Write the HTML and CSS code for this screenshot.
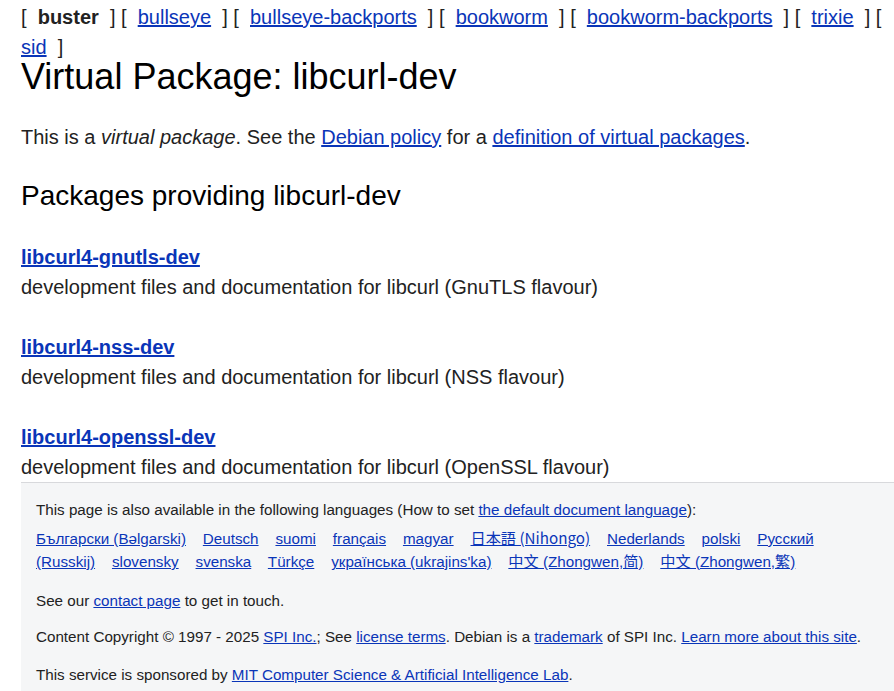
FILE: index.html
```html
<!DOCTYPE html>
<html lang="en">
<head>
<meta charset="utf-8">
<title>Debian -- Virtual Package: libcurl-dev</title>
<link rel="stylesheet" href="styles.css">
</head>
<body>
<div class="content">
  <div class="pnav">[&nbsp; <strong>buster</strong> &nbsp;] [&nbsp; <a href="#">bullseye</a> &nbsp;] [&nbsp; <a href="#">bullseye-backports</a> &nbsp;] [&nbsp; <a href="#">bookworm</a> &nbsp;] [&nbsp; <a href="#">bookworm-backports</a> &nbsp;] [&nbsp; <a href="#">trixie</a> &nbsp;] [&nbsp; <a href="#">sid</a> &nbsp;]</div>
  <h1>Virtual Package: libcurl-dev</h1>
  <p>This is a <em>virtual package</em>. See the <a href="#">Debian policy</a> for a <a href="#">definition of virtual packages</a>.</p>
  <h2>Packages providing libcurl-dev</h2>
  <dl class="pkgs">
    <dt><a href="#">libcurl4-gnutls-dev</a></dt>
    <dd>development files and documentation for libcurl (GnuTLS flavour)</dd>
    <dt><a href="#">libcurl4-nss-dev</a></dt>
    <dd>development files and documentation for libcurl (NSS flavour)</dd>
    <dt><a href="#">libcurl4-openssl-dev</a></dt>
    <dd>development files and documentation for libcurl (OpenSSL flavour)</dd>
  </dl>
</div>
<div class="footer">
  <p class="first">This page is also available in the following languages (How to set <a href="#">the default document language</a>):</p>
  <p class="langs">
    <a href="#">Български (Bəlgarski)</a>&nbsp;&nbsp;&nbsp;
    <a href="#">Deutsch</a>&nbsp;&nbsp;&nbsp;
    <a href="#">suomi</a>&nbsp;&nbsp;&nbsp;
    <a href="#">français</a>&nbsp;&nbsp;&nbsp;
    <a href="#">magyar</a>&nbsp;&nbsp;&nbsp;
    <a href="#" lang="ja" class="ja">日本語 (Nihongo)</a>&nbsp;&nbsp;&nbsp;
    <a href="#">Nederlands</a>&nbsp;&nbsp;&nbsp;
    <a href="#">polski</a>&nbsp;&nbsp;&nbsp;
    <a href="#">Русский (Russkij)</a>&nbsp;&nbsp;&nbsp;
    <a href="#">slovensky</a>&nbsp;&nbsp;&nbsp;
    <a href="#">svenska</a>&nbsp;&nbsp;&nbsp;
    <a href="#">Türkçe</a>&nbsp;&nbsp;&nbsp;
    <a href="#">українська (ukrajins'ka)</a>&nbsp;&nbsp;&nbsp;
    <a href="#" lang="zh-CN" class="zhs">中文 (Zhongwen,简)</a>&nbsp;&nbsp;&nbsp;
    <a href="#" lang="zh-TW" class="zht">中文 (Zhongwen,繁)</a>
  </p>
  <p class="contact">See our <a href="#">contact page</a> to get in touch.</p>
  <p class="copy">Content Copyright © 1997 - 2025 <a href="#">SPI Inc.</a>; See <a href="#">license terms</a>. Debian is a <a href="#">trademark</a> of SPI Inc. <a href="#">Learn more about this site</a>.</p>
  <p>This service is sponsored by <a href="#">MIT Computer Science &amp; Artificial Intelligence Lab</a>.</p>
</div>
</body>
</html>
```
FILE: styles.css
```css
html, body {
  margin: 0;
  padding: 0;
  background: #fff;
}
body {
  font-family: "Liberation Sans", Arial, "Noto Sans CJK JP", sans-serif;
  color: #222;
  font-size: 20px;
  line-height: 30px;
}
a { color: #0a35b8; text-decoration: underline; }
.content {
  padding: 0 0 0 21px;
}
.pnav {
  line-height: 30px;
  margin: 2px 0 0;
}
.pnav strong { color: #222; }
h1 {
  font-size: 36px;
  font-weight: normal;
  margin: 0;
  line-height: 30px;
  color: #000;
}
p { margin: 0; }
.content > p { margin: 30px 0 0; line-height: 30px; }
h2 {
  font-size: 28px;
  font-weight: normal;
  color: #000;
  margin: 24px 0 0;
  line-height: 40px;
}
.pkgs { margin: 26px 0 0; }
.pkgs dt { font-weight: bold; line-height: 30px; margin-top: 30px; }
.pkgs dt:first-child { margin-top: 0; }
.pkgs dd { margin: 0; line-height: 30px; }
.footer {
  margin: 0 0 0 21px;
  background: #f5f6f7;
  border-top: 1px solid #d8d9dc;
  padding: 15px 15px 10px;
  font-size: 15.2px;
  line-height: 23px;
}
.footer p { margin: 0 0 14px; }
.footer p.first { margin-bottom: 6px; }
.footer p.langs { margin-bottom: 16px; }
.footer p.contact { margin-bottom: 13px; }
.footer p.copy { margin-bottom: 15px; }
.footer .ja { font-family: "Noto Sans CJK JP", sans-serif; line-height: 1; }
.footer .zhs { font-family: "Liberation Sans", "Noto Sans CJK SC", sans-serif; line-height: 1; }
.footer .zht { font-family: "Liberation Sans", "Noto Sans CJK TC", sans-serif; line-height: 1; }
```
